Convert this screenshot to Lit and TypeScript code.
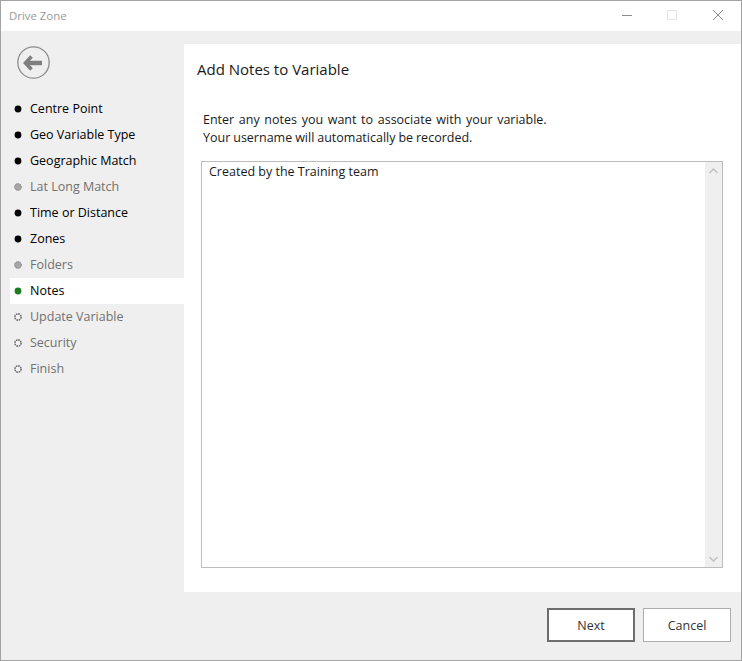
import { LitElement, html, css, svg } from 'lit';
import { customElement, property } from 'lit/decorators.js';

type StepState = 'done' | 'skipped' | 'current' | 'todo';

const steps: { label: string; state: StepState }[] = [
  { label: 'Centre Point', state: 'done' },
  { label: 'Geo Variable Type', state: 'done' },
  { label: 'Geographic Match', state: 'done' },
  { label: 'Lat Long Match', state: 'skipped' },
  { label: 'Time or Distance', state: 'done' },
  { label: 'Zones', state: 'done' },
  { label: 'Folders', state: 'skipped' },
  { label: 'Notes', state: 'current' },
  { label: 'Update Variable', state: 'todo' },
  { label: 'Security', state: 'todo' },
  { label: 'Finish', state: 'todo' },
];

@customElement('wizard-step')
export class WizardStep extends LitElement {
  @property() label: string = '';
  @property() state: StepState = 'done';
  static styles = css`
    :host {
      display: flex;
      align-items: center;
      box-sizing: border-box;
      height: 26px;
      padding-bottom: 2px;
      margin-left: 9px;
      font-size: 12.5px;
      color: #000;
    }
    :host([state='current']) {
      background: #fff;
    }
    :host([state='skipped']),
    :host([state='todo']) {
      color: #717171;
    }
    .dot {
      display: block;
      flex: none;
      margin-top: 2px;
      margin-left: 4px;
      margin-right: 8px;
    }
    .done {
      fill: #000;
    }
    .current {
      fill: #1e7d1e;
    }
    .skipped {
      fill: #a6a6a6;
      stroke: #7f7f7f;
      stroke-width: 0.9;
      stroke-dasharray: 1.3 0.9;
    }
    .todo {
      fill: #f4f4f4;
      stroke: #6e6e6e;
      stroke-width: 1.6;
      stroke-dasharray: 1.7 0.7;
    }
  `;
  render() {
    const r = this.state === 'todo' ? 3.1 : 3.4;
    return html`<svg class="dot" width="8" height="8" viewBox="0 0 8 8">
        <circle class=${this.state} cx="4" cy="4" r=${r}></circle>
      </svg>
      <span>${this.label}</span>`;
  }
}

@customElement('app-root')
export class AppRoot extends LitElement {
  static styles = css`
    :host {
      display: flex;
      flex-direction: column;
      box-sizing: border-box;
      width: 742px;
      height: 661px;
      border: 1px solid #a3a3a3;
      background: #efefef;
      font-family: 'Open Sans', 'Noto Sans', sans-serif;
    }
    .titlebar {
      display: flex;
      align-items: center;
      flex: none;
      height: 30px;
      padding-left: 8px;
      background: #fff;
      font-size: 11.4px;
      color: #999;
    }
    .title {
      flex: 1;
      padding-bottom: 2px;
    }
    .winbtn {
      display: flex;
      align-items: center;
      justify-content: center;
      width: 46px;
      height: 30px;
    }
    .winbtn svg {
      display: block;
    }
    .middle {
      display: flex;
      flex: 1;
      min-height: 0;
      padding-top: 13px;
    }
    .side {
      flex: none;
      width: 183px;
    }
    .back {
      display: block;
      margin: 2px 0 17px 16px;
    }
    .panel {
      flex: 1;
      display: flex;
      flex-direction: column;
      background: #fff;
      padding: 0 18px 24px 17px;
    }
    h1 {
      margin: 15px 0 0 -4px;
      height: 21px;
      line-height: 21px;
      font-size: 15px;
      font-weight: 400;
      color: #1a1a1a;
    }
    .intro {
      margin: 31px 0 14px 2px;
      font-size: 12.5px;
      line-height: 18px;
      color: #1a1a1a;
    }
    .intro-first {
      word-spacing: 1.4px;
    }
    .intro-second {
      word-spacing: -0.3px;
    }
    .notes {
      flex: 1;
      display: flex;
      min-height: 0;
      border: 1px solid #bcbcbc;
    }
    .notes-text {
      flex: 1;
      padding: 1px 7px;
      font-size: 12.5px;
      line-height: 18px;
      color: #1a1a1a;
    }
    .scrollbar {
      flex: none;
      display: flex;
      flex-direction: column;
      justify-content: space-between;
      align-items: center;
      box-sizing: border-box;
      width: 17px;
      padding: 6px 0 5px;
      background: #efefef;
    }
    .scrollbar svg {
      display: block;
    }
    .footer {
      flex: none;
      display: flex;
      justify-content: flex-end;
      gap: 8px;
      height: 68px;
      box-sizing: border-box;
      padding: 16px 10px 0 0;
    }
    button {
      width: 88px;
      height: 34px;
      box-sizing: border-box;
      border: 1px solid #adadad;
      background: #fff;
      font: inherit;
      font-size: 12.5px;
      color: #333;
      padding: 0;
    }
    button.primary {
      border: 2px solid #6d6d6d;
    }
  `;

  icon(path: unknown) {
    return html`<svg width="12" height="12" viewBox="0 0 12 12" fill="none">${path}</svg>`;
  }

  render() {
    return html`
      <div class="titlebar">
        <span class="title">Drive Zone</span>
        <span class="winbtn">${this.icon(svg`<path d="M2 5.5h10" stroke="#8c8c8c"/>`)}</span>
        <span class="winbtn">${this.icon(svg`<rect x="1.5" y="0.5" width="9" height="9" stroke="#e6e6e6"/>`)}</span>
        <span class="winbtn">${this.icon(svg`<path d="M1 0l10 10M11 0L1 10" stroke="#8c8c8c"/>`)}</span>
      </div>
      <div class="middle">
        <div class="side">
          <svg class="back" width="33" height="33" viewBox="0 0 33 33" fill="none">
            <circle cx="16.5" cy="16.5" r="15.7" stroke="#8c8c8c" stroke-width="1.3"/>
            <path d="M10 17h15" stroke="#7f7f7f" stroke-width="4.5"/>
            <path d="M14.5 10.5L8.5 17l6 6.500" stroke="#7f7f7f" stroke-width="3.6"/>
          </svg>
          ${steps.map((s) => html`<wizard-step .label=${s.label} state=${s.state}></wizard-step>`)}
        </div>
        <div class="panel">
          <h1>Add Notes to Variable</h1>
          <p class="intro">
            <span class="intro-first">Enter any notes you want to associate with your variable.</span><br />
            <span class="intro-second">Your username will automatically be recorded.</span>
          </p>
          <div class="notes">
            <div class="notes-text">Created by the Training team</div>
            <div class="scrollbar">
              <svg width="9" height="6" viewBox="0 0 9 6" fill="none"><path d="M.5 5L4.500 1l4 4" stroke="#c0c0c0" stroke-width="1.5"/></svg>
              <svg width="9" height="6" viewBox="0 0 9 6" fill="none"><path d="M.5 1l4 4 4-4" stroke="#c0c0c0" stroke-width="1.5"/></svg>
            </div>
          </div>
        </div>
      </div>
      <div class="footer">
        <button class="primary">Next</button>
        <button>Cancel</button>
      </div>
    `;
  }
}
